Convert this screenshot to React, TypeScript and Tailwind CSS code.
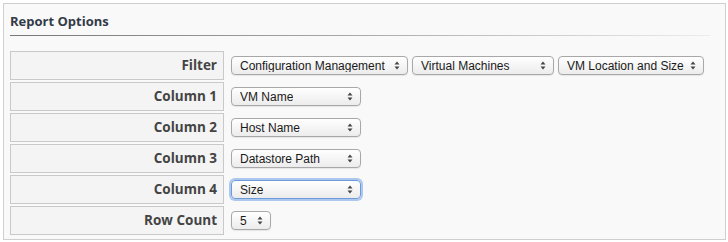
import React from "react";

type SelectProps = {
    value: string;
    width: string;
    focused?: boolean;
};

function Arrows() {
    return (
        <svg width="6" height="9" viewBox="0 0 6 9" className="shrink-0">
            <path d="M3 0.5 L5.5 3.5 L0.5 3.5 Z" fill="#444" />
            <path d="M3 8.5 L5.5 5.5 L0.5 5.5 Z" fill="#444" />
        </svg>
    );
}

function FakeSelect({ value, width, focused }: SelectProps) {
    return (
        <div
            className={
                "flex h-[19px] items-center justify-between rounded-[4px] border bg-gradient-to-b from-white to-[#ececec] pl-[8px] pr-[7px] text-[12px] text-[#1a1a1a] " +
                width +
                (focused
                    ? " border-[#6d9ad8] shadow-[0_0_0_2px_rgba(110,160,230,0.55)]"
                    : " border-[#a8a8a8] shadow-[0_1px_1px_rgba(0,0,0,0.08)]")
            }
            style={{ fontFamily: '"Liberation Sans", Arial, sans-serif' }}
        >
            <span className="truncate leading-none">{value}</span>
            <Arrows />
        </div>
    );
}

const rows: { label: string; selects: SelectProps[] }[] = [
    {
        label: "Filter",
        selects: [
            { value: "Configuration Management", width: "w-[177px]" },
            { value: "Virtual Machines", width: "w-[142px]" },
            { value: "VM Location and Size", width: "w-[146px]" },
        ],
    },
    { label: "Column 1", selects: [{ value: "VM Name", width: "w-[130px]" }] },
    { label: "Column 2", selects: [{ value: "Host Name", width: "w-[130px]" }] },
    { label: "Column 3", selects: [{ value: "Datastore Path", width: "w-[130px]" }] },
    { label: "Column 4", selects: [{ value: "Size", width: "w-[130px]", focused: true }] },
    { label: "Row Count", selects: [{ value: "5", width: "w-[40px]" }] },
];

export default function App() {
    return (
        <div className="h-[242px] w-[728px] bg-white pl-[3px] pt-[3px]" style={{ fontFamily: '"Open Sans", sans-serif' }}>
            <div className="h-[237px] w-[723px] border border-[#cfcfcf] bg-[#f9f9f9] px-[6px]">
                <div className="pt-[8px] text-[13px] font-bold leading-[18px] text-[#333b48]">Report Options</div>
                <div className="mt-[5px] h-px w-[700px] bg-gradient-to-r from-[#777] via-[#aaa] to-[#ededed]" />
                <div className="mt-[15px] grid grid-cols-[214px_1fr] gap-x-[7px] gap-y-[2px]">
                    {rows.map((row) => (
                        <React.Fragment key={row.label}>
                            <div className="flex h-[29px] items-center justify-end border border-[#c9c9c9] bg-[#f4f4f4] pr-[6px] text-[13.5px] font-bold text-[#444]">
                                {row.label}
                            </div>
                            <div className="flex h-[29px] items-center gap-[4px]">
                                {row.selects.map((s) => (
                                    <FakeSelect key={s.value} {...s} />
                                ))}
                            </div>
                        </React.Fragment>
                    ))}
                </div>
            </div>
        </div>
    );
}
